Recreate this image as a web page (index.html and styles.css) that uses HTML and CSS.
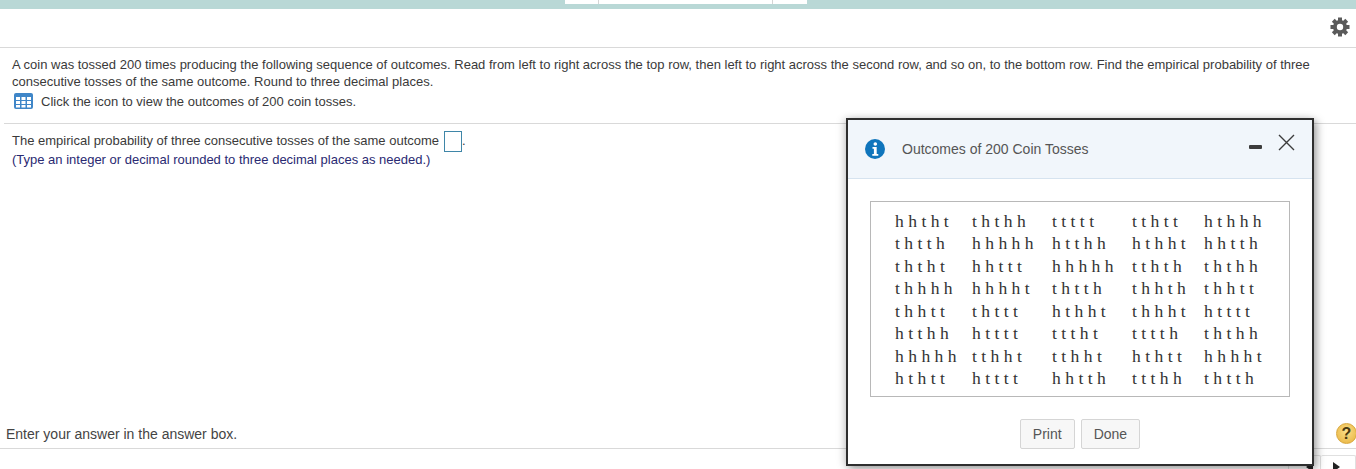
FILE: index.html
```html
<!DOCTYPE html>
<html lang="en">
<head>
<meta charset="utf-8">
<title>Outcomes of 200 Coin Tosses</title>
<link rel="stylesheet" href="styles.css">
</head>
<body>
<div class="page">
  <div class="topbar"><div class="tabs"><span class="tab t1"></span><span class="tab t2"></span><span class="tab t3"></span></div></div>
  <div class="toolbar">
    <svg class="gear" width="20" height="20" viewBox="0 0 20 20"><g fill="#5a5a5a"><circle cx="10" cy="10" r="7"/><rect x="8" y="0.500" width="4" height="19"/><rect x="8" y="0.500" width="4" height="19" transform="rotate(45 10 10)"/><rect x="8" y="0.500" width="4" height="19" transform="rotate(90 10 10)"/><rect x="8" y="0.500" width="4" height="19" transform="rotate(135 10 10)"/></g><circle cx="10" cy="10" r="3.200" fill="#fff"/></svg>
  </div>
  <div class="question">
    <p class="prompt">A coin was tossed 200 times producing the following sequence of outcomes. Read from left to right across the top row, then left to right across the second row, and so on, to the bottom row. Find the empirical probability of three consecutive tosses of the same outcome. Round to three decimal places.</p>
    <p class="iconline">
      <svg class="grid-icon" width="19" height="16" viewBox="0 0 19 16"><rect width="19" height="16" rx="2" fill="#3f86c8"/><g fill="#fff"><rect x="2" y="4" width="4" height="3"/><rect x="7.500" y="4" width="4" height="3"/><rect x="13" y="4" width="4" height="3"/><rect x="2" y="8" width="4" height="3"/><rect x="7.500" y="8" width="4" height="3"/><rect x="13" y="8" width="4" height="3"/><rect x="2" y="12" width="4" height="2.500"/><rect x="7.500" y="12" width="4" height="2.500"/><rect x="13" y="12" width="4" height="2.500"/></g></svg>
      <span>Click the icon to view the outcomes of 200 coin tosses.</span>
    </p>
  </div>
  <div class="answer">
    <p class="answerline">The empirical probability of three consecutive tosses of the same outcome<span class="answerbox"></span>.</p>
    <p class="hint">(Type an integer or decimal rounded to three decimal places as needed.)</p>
  </div>
  <div class="spacer"></div>
  <div class="footer">
    <span class="enter">Enter your answer in the answer box.</span>
    <span class="help">?</span>
  </div>
  <div class="bottom">
    <span class="nav"><svg width="8" height="10" viewBox="0 0 8 10"><path d="M7 0L0 5l7 5z" fill="#222"/></svg></span>
    <span class="nav next"><svg width="8" height="10" viewBox="0 0 8 10"><path d="M1 0l7 5-7 5z" fill="#222"/></svg></span>
  </div>

  <section class="dialog">
    <header class="dlg-head">
      <svg class="info" width="20" height="20" viewBox="0 0 20 20"><circle cx="10" cy="10" r="10" fill="#0f75bc"/><circle cx="10.300" cy="5" r="1.800" fill="#fff"/><path d="M7.500 8h4.200v7h1.600v1.700H7.300V15h1.600V9.700H7.500z" fill="#fff"/></svg>
      <h2 class="dlg-title">Outcomes of 200 Coin Tosses</h2>
      <span class="minimize"></span>
      <svg class="close" width="17" height="17" viewBox="0 0 17 17"><path d="M1 1l15 15M16 1L1 16" stroke="#3c3c3c" stroke-width="1.400" fill="none"/></svg>
    </header>
    <div class="dlg-body">
      <div class="outcomes">
        <span>h h t h t</span><span>t h t h h</span><span>t t t t t</span><span>t t h t t</span><span>h t h h h</span>
        <span>t h t t h</span><span>h h h h h</span><span>h t t h h</span><span>h t h h t</span><span>h h t t h</span>
        <span>t h t h t</span><span>h h t t t</span><span>h h h h h</span><span>t t h t h</span><span>t h t h h</span>
        <span>t h h h h</span><span>h h h h t</span><span>t h t t h</span><span>t h h t h</span><span>t h h t t</span>
        <span>t h h t t</span><span>t h t t t</span><span>h t h h t</span><span>t h h h t</span><span>h t t t t</span>
        <span>h t t h h</span><span>h t t t t</span><span>t t t h t</span><span>t t t t h</span><span>t h t h h</span>
        <span>h h h h h</span><span>t t h h t</span><span>t t h h t</span><span>h t h t t</span><span>h h h h t</span>
        <span>h t h t t</span><span>h t t t t</span><span>h h t t h</span><span>t t t h h</span><span>t h t t h</span>
      </div>
      <div class="actions">
        <button class="btn print" type="button">Print</button>
        <button class="btn done" type="button">Done</button>
      </div>
    </div>
  </section>
</div>
</body>
</html>
```
FILE: styles.css
```css
* { box-sizing: border-box; }
html, body { margin: 0; padding: 0; }
body { font-family: "Liberation Sans", Arial, sans-serif; font-size: 13px; color: #3a3a3a; background: #fff; }
p, h2 { margin: 0; font-weight: normal; }

.page { position: relative; width: 1356px; height: 469px; overflow: hidden; display: flex; flex-direction: column; }

.topbar { height: 9px; background: #b9d8d6; display: flex; justify-content: center; flex: none; }
.tabs { display: flex; height: 4px; margin-left: 16px; }
.tab { background: #fff; border-right: 1px solid #d5d5d5; }
.t1 { width: 34px; }
.t2 { width: 174px; }
.t3 { width: 34px; border-right: 0; }

.toolbar { height: 39px; flex: none; display: flex; justify-content: flex-end; align-items: center; padding: 0 6px 2px 0; border-bottom: 1px solid #d9d9d9; }
.gear { display: block; }

.question { padding: 9px 12px 0; flex: none; }
.prompt { line-height: 16.500px; width: 1310px; }
.iconline { display: flex; align-items: center; gap: 8px; margin: 2px 0 0 2px; height: 18px; }
.grid-icon { display: block; }

.answer { margin: 13px 0 0 4px; padding: 7px 8px 0; border-top: 1px solid #d9d9d9; flex: none; }
.answerline { line-height: 19px; height: 21px; display: flex; align-items: flex-start; white-space: pre; }
.answerbox { display: block; width: 18px; height: 21px; border: 1px solid #3f86a8; margin-left: 5px; }
.hint { color: #2a2a72; line-height: 16px; }

.spacer { flex: 1; }

.footer { height: 28px; flex: none; display: flex; align-items: center; justify-content: space-between; padding: 0 0 0 6px; border-bottom: 1px solid #d9d9d9; }
.enter { color: #444; font-size: 14px; margin-bottom: 1px; }
.help { width: 21px; height: 21px; border-radius: 50%; margin: 0 -1px 2px 0; background: radial-gradient(circle at 50% 40%, #fbe08a, #e7b03a); border: 1px solid #d8a63a; color: #4a3a10; font-weight: bold; font-size: 16px; line-height: 19px; text-align: center; }

.bottom { height: 20px; flex: none; display: flex; justify-content: flex-end; align-items: flex-end; }
.nav { width: 33px; height: 14px; padding: 6px 0 0 17px; border: 1px solid #e0e0e0; border-bottom: 0; border-radius: 2px 2px 0 0; display: block; }
.nav.next { width: 35px; padding-left: 11px; border-left: 0; }
.nav svg { display: block; }

.dialog { position: absolute; left: 846px; top: 118px; width: 468px; height: 348px; background: #fff; border: 2px solid #2e2e2e; box-shadow: 3px 3px 8px rgba(0,0,0,.35), -3px 0 8px rgba(0,0,0,.12); display: flex; flex-direction: column; }
.dlg-head { height: 59px; flex: none; background: #f1f6fb; border-bottom: 1px solid #d6e3ef; display: flex; align-items: center; padding: 0 17px 0 17px; }
.info { display: block; flex: none; }
.dlg-title { font-size: 14px; color: #555; margin-left: 17px; flex: 1; }
.minimize { width: 13px; height: 4px; border-radius: 1px; background: #3c3c3c; margin: 0 16px 0 0; transform: translateY(-2px); }
.close { display: block; transform: translateY(-7px); }

.dlg-body { flex: 1; padding: 22px 22px 0; display: flex; flex-direction: column; }
.outcomes { height: 196px; border: 1px solid #b8b8b8; padding: 8px 0 0 24px; display: grid; grid-template-columns: 77px 80px 80px 72px 80px; grid-auto-rows: 22.500px; align-items: center; font-family: "Liberation Serif", "Times New Roman", serif; font-size: 17.600px; color: #333; white-space: nowrap; }

.actions { display: flex; justify-content: center; gap: 6px; margin-top: 22px; }
.btn { height: 30px; padding: 0 12px; font: 14px/28px "Liberation Sans", Arial, sans-serif; color: #555; background: #f7f7f7; border: 1px solid #d5d5d5; border-radius: 2px; }
```
